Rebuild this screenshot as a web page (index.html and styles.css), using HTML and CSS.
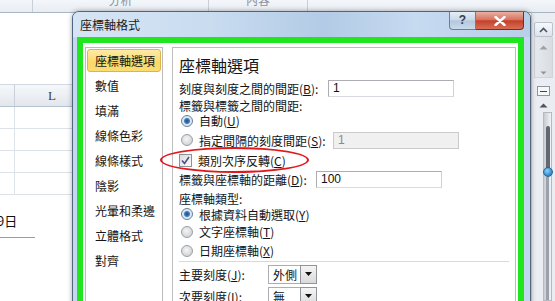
FILE: index.html
```html
<!DOCTYPE html>
<html lang="zh-Hant">
<head>
<meta charset="utf-8">
<title>座標軸格式</title>
<link rel="stylesheet" href="styles.css">
</head>
<body>
<div class="excel">
  <div class="ribbon">
    <div class="rg rg1"></div>
    <div class="rg rg2"><span>分析</span></div>
    <div class="rg rg3"><span>內容</span></div>
    <div class="rg rg4"></div>
  </div>
  <div class="work">
    <div class="sheet">
      <div class="blank"></div>
      <div class="colhead"><div class="c1"></div><div class="c2">L</div></div>
      <div class="grow"><div class="c1"></div><div class="c2"></div></div>
      <div class="grow"><div class="c1"></div><div class="c2"></div></div>
      <div class="grow"><div class="c1"></div><div class="c2"></div></div>
      <div class="grow"><div class="c1"></div><div class="c2"></div></div>
      <div class="chart">
        <div class="date">9日</div>
        <div class="axis"></div>
      </div>
    </div>
    <div class="mid"></div>
    <div class="vscroll">
      <div class="sb-btn"><svg width="9" height="6" viewBox="0 0 9 6"><path d="M1 5 L4.5 1.5 L8 5" fill="none" stroke="#4a5563" stroke-width="1.6"/></svg></div>
      <div class="sb-gal">
        <svg width="9" height="5" viewBox="0 0 9 5"><path d="M0.5 4.5 L4.5 0.5 L8.5 4.5 Z" fill="#9aa3ad"/></svg>
        <svg width="7" height="4" viewBox="0 0 7 4"><path d="M0.5 0.5 L6.5 0.5 L3.5 3.5 Z" fill="#8b949e"/></svg>
      </div>
      <div class="sb-min"><span></span></div>
      <div class="sb-up"><svg width="9" height="5" viewBox="0 0 9 5"><path d="M0.5 4.5 L4.5 0.5 L8.5 4.5 Z" fill="#4c5560"/></svg></div>
      <div class="sb-track">
        <div class="slot"></div>
        <div class="knob"></div>
        <div class="tail"></div>
      </div>
    </div>
  </div>
</div>

<div class="dialog">
  <div class="titlebar">
    <span class="title">座標軸格式</span>
    <div class="tb-buttons">
      <div class="btn-help">?</div>
      <div class="btn-close"><svg width="12" height="10" viewBox="0 0 12 10"><path d="M1.5 1 L10.5 9 M10.5 1 L1.5 9" stroke="#fff" stroke-width="2.4" stroke-linecap="round"/></svg></div>
    </div>
  </div>
  <div class="frame">
    <div class="green">
      <div class="nav">
        <div class="ni selected">座標軸選項</div>
        <div class="ni">數值</div>
        <div class="ni">填滿</div>
        <div class="ni">線條色彩</div>
        <div class="ni">線條樣式</div>
        <div class="ni">陰影</div>
        <div class="ni">光暈和柔邊</div>
        <div class="ni">立體格式</div>
        <div class="ni">對齊</div>
      </div>
      <div class="panel">
        <div class="heading">座標軸選項</div>
        <div class="row r1">
          <span class="lbl lbl-a">刻度與刻度之間的間距(<u>B</u>):</span>
          <span class="tb">1</span>
        </div>
        <div class="row r2"><span class="lbl">標籤與標籤之間的間距:</span></div>
        <div class="row r3"><span class="radio on"></span><span class="lbl">自動(<u>U</u>)</span></div>
        <div class="row r4">
          <span class="radio"></span><span class="lbl lbl-b">指定間隔的刻度間距(<u>S</u>):</span>
          <span class="tb disabled">1</span>
        </div>
        <div class="row r5">
          <span class="check"><svg width="9" height="9" viewBox="0 0 9 9"><path d="M1 4.5 L3.5 7.5 L8 1" fill="none" stroke="#4b4f86" stroke-width="1.6"/></svg></span>
          <span class="lbl">類別次序反轉(<u>C</u>)</span>
        </div>
        <div class="row r6">
          <span class="lbl lbl-c">標籤與座標軸的距離(<u>D</u>):</span>
          <span class="tb">100</span>
        </div>
        <div class="row r7"><span class="lbl">座標軸類型:</span></div>
        <div class="row r8"><span class="radio on"></span><span class="lbl">根據資料自動選取(<u>Y</u>)</span></div>
        <div class="row r9"><span class="radio"></span><span class="lbl">文字座標軸(<u>T</u>)</span></div>
        <div class="row r10"><span class="radio"></span><span class="lbl">日期座標軸(<u>X</u>)</span></div>
        <div class="sep"></div>
        <div class="row r11">
          <span class="lbl lbl-d">主要刻度(<u>J</u>):</span>
          <span class="sel"><span class="sel-text">外側</span><span class="sel-btn"><svg width="7" height="4" viewBox="0 0 7 4"><path d="M0 0 L7 0 L3.5 4 Z" fill="#111"/></svg></span></span>
        </div>
        <div class="row r12">
          <span class="lbl lbl-d">次要刻度(<u>I</u>):</span>
          <span class="sel"><span class="sel-text">無</span><span class="sel-btn"><svg width="7" height="4" viewBox="0 0 7 4"><path d="M0 0 L7 0 L3.5 4 Z" fill="#111"/></svg></span></span>
        </div>
      </div>
    </div>
  </div>
</div>

<div class="annot"></div>
</body>
</html>
```
FILE: styles.css
```css
* { box-sizing: border-box; margin: 0; padding: 0; }

body {
  width: 555px;
  height: 301px;
  overflow: hidden;
  position: relative;
  background: #fff;
  font-family: "Noto Sans CJK TC", "Noto Sans", sans-serif;
  font-size: 12px;
  color: #141414;
}

/* ---------- Excel background ---------- */
.excel { display: flex; flex-direction: column; height: 301px; }

.ribbon {
  height: 13px;
  display: flex;
  background: linear-gradient(#f3f6fa, #e8edf3);
  border-bottom: 1px solid #aab5c3;
  overflow: hidden;
}
.rg {
  border-right: 1px solid #c7cfd9;
  display: flex;
  justify-content: center;
  align-items: flex-end;
  color: #8792a1;
  font-size: 12px;
  line-height: 12px;
}
.rg span { margin-bottom: 6px; }
.rg1 { width: 33px; }
.rg2 { width: 176px; }
.rg3 { width: 99px; }
.rg4 { flex: 1; border-right: 0; }

.work { flex: 1; display: flex; }

.sheet { width: 72px; display: flex; flex-direction: column; }
.blank { height: 71px; }
.colhead {
  height: 23px;
  display: flex;
  background: linear-gradient(#f6f8fa, #e2e7ed);
  border-top: 1px solid #d3d9e1;
  border-bottom: 1px solid #b9c3cf;
}
.c1 { width: 15px; border-right: 1px solid #c9d0d9; }
.c2 { flex: 1; }
.colhead .c2 {
  display: flex;
  align-items: flex-end;
  padding: 0 0 2px 33px;
  font-family: "Liberation Serif", serif;
  font-size: 13px;
  color: #3a3f46;
}
.grow { height: 22px; display: flex; border-bottom: 1px solid #dde2e8; }
.grow .c1 { border-right-color: #dde2e8; }

.chart { flex: 1; padding-top: 18px; }
.date { margin-left: -3px; font-size: 13px; line-height: 16px; color: #111; }
.axis { width: 35px; margin-top: 8px; border-top: 1px solid #9c9c9c; }

.mid { flex: 1; }

.vscroll {
  width: 24px;
  background: #eaedf1;
  border-left: 1px solid #cfd6de;
  padding-top: 9px;
  display: flex;
  flex-direction: column;
  align-items: center;
}
.sb-btn {
  width: 19px;
  height: 15px;
  border: 1px solid #b9c3cf;
  border-radius: 2px;
  background: linear-gradient(#f7f9fb, #dfe4ea);
  display: flex;
  align-items: center;
  justify-content: center;
}
.sb-gal {
  width: 19px;
  height: 41px;
  background: linear-gradient(90deg, #e6e9ed, #d9dde2);
  border: 1px solid #cfd5dc;
  border-top: 0;
  display: flex;
  flex-direction: column;
  align-items: center;
  justify-content: space-between;
  padding: 8px 0 2px;
}
.sb-min {
  width: 13px;
  height: 10px;
  margin-top: 8px;
  border: 1px solid #8d96a1;
  background: #f6f7f9;
  display: flex;
  align-items: center;
  justify-content: center;
}
.sb-min span { width: 7px; height: 1px; background: #444; }
.sb-up { margin-top: 6px; height: 6px; display: flex; align-items: center; }
.sb-track {
  margin: 4px 0 0 8px;
  width: 9px;
  flex: 1;
  background: linear-gradient(90deg, #c7ccd2, #f2f4f6);
  border: 1px solid #b3bac3;
  display: flex;
  flex-direction: column;
  align-items: center;
  padding-top: 13px;
}
.slot { width: 4px; height: 45px; background: #5f6872; border-radius: 2px; }
.knob {
  width: 10px;
  height: 10px;
  border-radius: 50%;
  margin-top: -4px;
  background: radial-gradient(circle at 40% 35%, #8fd0f4, #2f86c9 70%);
  border: 1px solid #23669b;
}
.tail { width: 3px; flex: 1; background: #9aa3ad; }

/* ---------- Dialog ---------- */
.dialog {
  position: absolute;
  left: 72px;
  top: 11px;
  width: 459px;
  height: 300px;
  border: 1px solid #50657f;
  border-radius: 7px 7px 0 0;
  background: #c3d7ee;
  box-shadow: 0 0 5px rgba(0, 0, 0, 0.35);
  display: flex;
  flex-direction: column;
  overflow: hidden;
}
.titlebar {
  height: 25px;
  display: flex;
  align-items: center;
  padding-left: 7px;
  background: linear-gradient(90deg, #d6e5f4 0%, #c9dcf0 30%, #b3cbe6 55%, #c6daf0 75%, #b8cfe8 100%);
}
.title { font-size: 12px; color: #1b1b1b; padding-bottom: 1px; }
.tb-buttons {
  margin-left: auto;
  margin-right: 6px;
  align-self: flex-start;
  display: flex;
}
.btn-help {
  width: 27px;
  height: 18px;
  border: 1px solid #6a7f99;
  border-top: 0;
  border-radius: 0 0 0 4px;
  background: linear-gradient(#e5edf6, #c9d7e7 48%, #b3c6dc 52%, #cbdbeb);
  color: #33404f;
  font-family: "Liberation Sans", sans-serif;
  font-weight: bold;
  font-size: 12px;
  line-height: 17px;
  text-align: center;
}
.btn-close {
  width: 48px;
  height: 18px;
  border: 1px solid #7b2b22;
  border-left: 0;
  border-top: 0;
  border-radius: 0 0 4px 0;
  background: linear-gradient(#eab0a3, #d7735f 45%, #c5412b 52%, #d86e55);
  display: flex;
  align-items: center;
  justify-content: center;
}

.frame { flex: 1; padding: 0 6px 0 4px; min-height: 0; }
.green {
  height: 100%;
  border: 6px solid #1fe61f;
  border-bottom: 0;
  background: #fff;
  display: flex;
  padding: 4px 2px 0 2px;
  align-items: flex-start;
}

.nav {
  width: 78px;
  height: 270px;
  border: 1px solid #bcbcbc;
  padding-top: 0;
}
.ni {
  height: 25px;
  display: flex;
  align-items: center;
  padding-left: 9px;
  white-space: nowrap;
  color: #151515;
}
.ni.selected {
  height: 23px;
  margin: 1px 1px 1px 1px;
  padding-left: 7px;
  border: 1px solid #e0b24a;
  border-radius: 3px;
  background: linear-gradient(#fdeaa6, #fbd867 60%, #fcdc74);
}

.panel {
  flex: 1;
  height: 270px;
  margin-left: 9px;
  border: 1px solid #bdbdbd;
  padding: 4px 0 0 6px;
  display: flex;
  flex-direction: column;
}
.heading { height: 26px; line-height: 26px; font-size: 16px; color: #161616; }

.row { display: flex; align-items: center; white-space: nowrap; }
.r1 { height: 20px; }
.r2 { height: 15px; }
.r3 { height: 15px; }
.r4 { height: 24px; }
.r5 { height: 16px; }
.r6 { height: 23px; }
.r7 { height: 15px; }
.r8 { height: 16px; }
.r9 { height: 19px; }
.r10 { height: 19px; }
.r11 { height: 20px; margin-top: 2px; }
.r12 { height: 20px; margin-top: 2px; }

.lbl { line-height: 15px; }
.lbl u { text-underline-offset: 1px; }
.lbl-a { width: 149px; }
.lbl-b { width: 134px; }
.lbl-c { width: 137px; }
.lbl-d { width: 89px; }

.tb {
  width: 126px;
  height: 17px;
  border: 1px solid #abadb3;
  border-right-color: #cfd1d6;
  border-bottom-color: #d8d9de;
  background: #fff;
  padding-left: 4px;
  line-height: 15px;
  font-family: "Liberation Sans", sans-serif;
  font-size: 12px;
  color: #111;
}
.tb.disabled { background: #f0f0f0; border-color: #cacaca; color: #8a8a8a; }

.radio {
  width: 12px;
  height: 12px;
  margin: 0 6px 0 2px;
  border-radius: 50%;
  border: 1px solid #9a9ea3;
  background: radial-gradient(circle at 45% 40%, #f6f6f6, #cfd1d3 80%);
}
.radio.on {
  border-color: #6b7e95;
  background: radial-gradient(circle at 50% 50%, #1e4e86 0, #3f7fc0 2.5px, #d7e6f4 3.5px, #e9eef4 100%);
}
.check {
  width: 13px;
  height: 13px;
  margin-right: 6px;
  border: 1px solid #8e9296;
  background: linear-gradient(135deg, #dcdcdc, #fafafa);
  display: flex;
  align-items: center;
  justify-content: center;
}

.sep { height: 1px; background: #d9d9d9; margin: 1px 6px 0 0; }

.sel { display: flex; height: 19px; }
.sel-text {
  width: 32px;
  border: 1px solid #abadb3;
  border-right: 0;
  padding-left: 4px;
  line-height: 17px;
  background: #fff;
}
.sel-btn {
  width: 17px;
  border: 1px solid #8f959c;
  background: linear-gradient(#f5f5f5, #dadada);
  display: flex;
  align-items: center;
  justify-content: center;
}

/* ---------- annotation ---------- */
.annot {
  position: absolute;
  left: 160px;
  top: 147px;
  width: 149px;
  height: 26px;
  border: 2.5px solid #e3161b;
  border-radius: 50%;
}
```
